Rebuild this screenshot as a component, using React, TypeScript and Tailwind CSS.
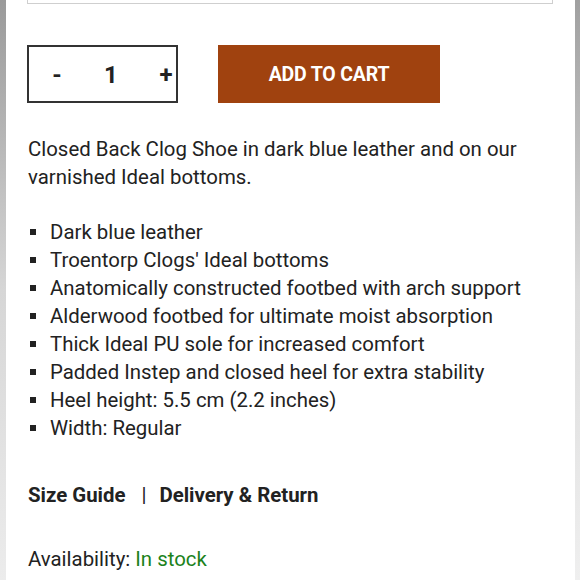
import React from "react";

const items = [
  "Dark blue leather",
  "Troentorp Clogs' Ideal bottoms",
  "Anatomically constructed footbed with arch support",
  "Alderwood footbed for ultimate moist absorption",
  "Thick Ideal PU sole for increased comfort",
  "Padded Instep and closed heel for extra stability",
  "Heel height: 5.5 cm (2.2 inches)",
  "Width: Regular",
];

export default function App() {
  return (
    <div
      className="flex h-[580px] w-[580px] overflow-hidden bg-white text-[#222]"
      style={{ fontFamily: "Roboto, 'Noto Sans', sans-serif" }}
    >
      <div className="w-[6px] shrink-0 bg-gradient-to-b from-[#9a9a9a] via-[#d6d6d6] to-[#ececec]" />
      <div className="flex flex-1 flex-col">
        <div className="ml-[21px] h-[4px] w-[526px] border-x border-b border-[#cfcfcf]" />
        <div className="ml-[21px] mt-[41px] flex gap-[40px]">
          <div className="flex h-[58px] w-[151px] items-center border-2 border-[#333] pt-[2px] text-[24px] font-bold text-[#222]">
            <span className="ml-[21px] w-[14px] text-center">-</span>
            <span className="ml-[40px] w-[14px] text-center">1</span>
            <span className="ml-[40px] w-[16px] text-center">+</span>
          </div>
          <div className="flex h-[58px] w-[222px] items-center justify-center bg-[#a0420f] pt-[2px] text-[19.5px] font-bold tracking-[-0.2px] text-white">
            ADD TO CART
          </div>
        </div>
        <p className="ml-[22px] mt-[32px] w-[530px] text-[20.4px] leading-[28px]">
          Closed Back Clog Shoe in dark blue leather and on our varnished Ideal bottoms.
        </p>
        <ul className="ml-[24px] mt-[27px] flex flex-col">
          {items.map((t) => (
            <li key={t} className="flex items-center text-[20.4px] leading-[28px]">
              <span className="h-[6px] w-[6px] bg-[#222]" />
              <span className="ml-[14px]">{t}</span>
            </li>
          ))}
        </ul>
        <div className="ml-[22px] mt-[39px] flex text-[20.4px] font-bold leading-[28px]">
          <span>Size Guide</span>
          <span className="ml-[16px] font-normal">|</span>
          <span className="ml-[13px]">Delivery &amp; Return</span>
        </div>
        <div className="ml-[22px] mt-[36px] text-[20.4px] leading-[28px]">
          Availability: <span className="text-[#1b821b]">In stock</span>
        </div>
      </div>
      <div className="w-[5px] shrink-0 bg-gradient-to-b from-[#a0a0a0] via-[#dcdcdc] to-[#efefef]" />
    </div>
  );
}
